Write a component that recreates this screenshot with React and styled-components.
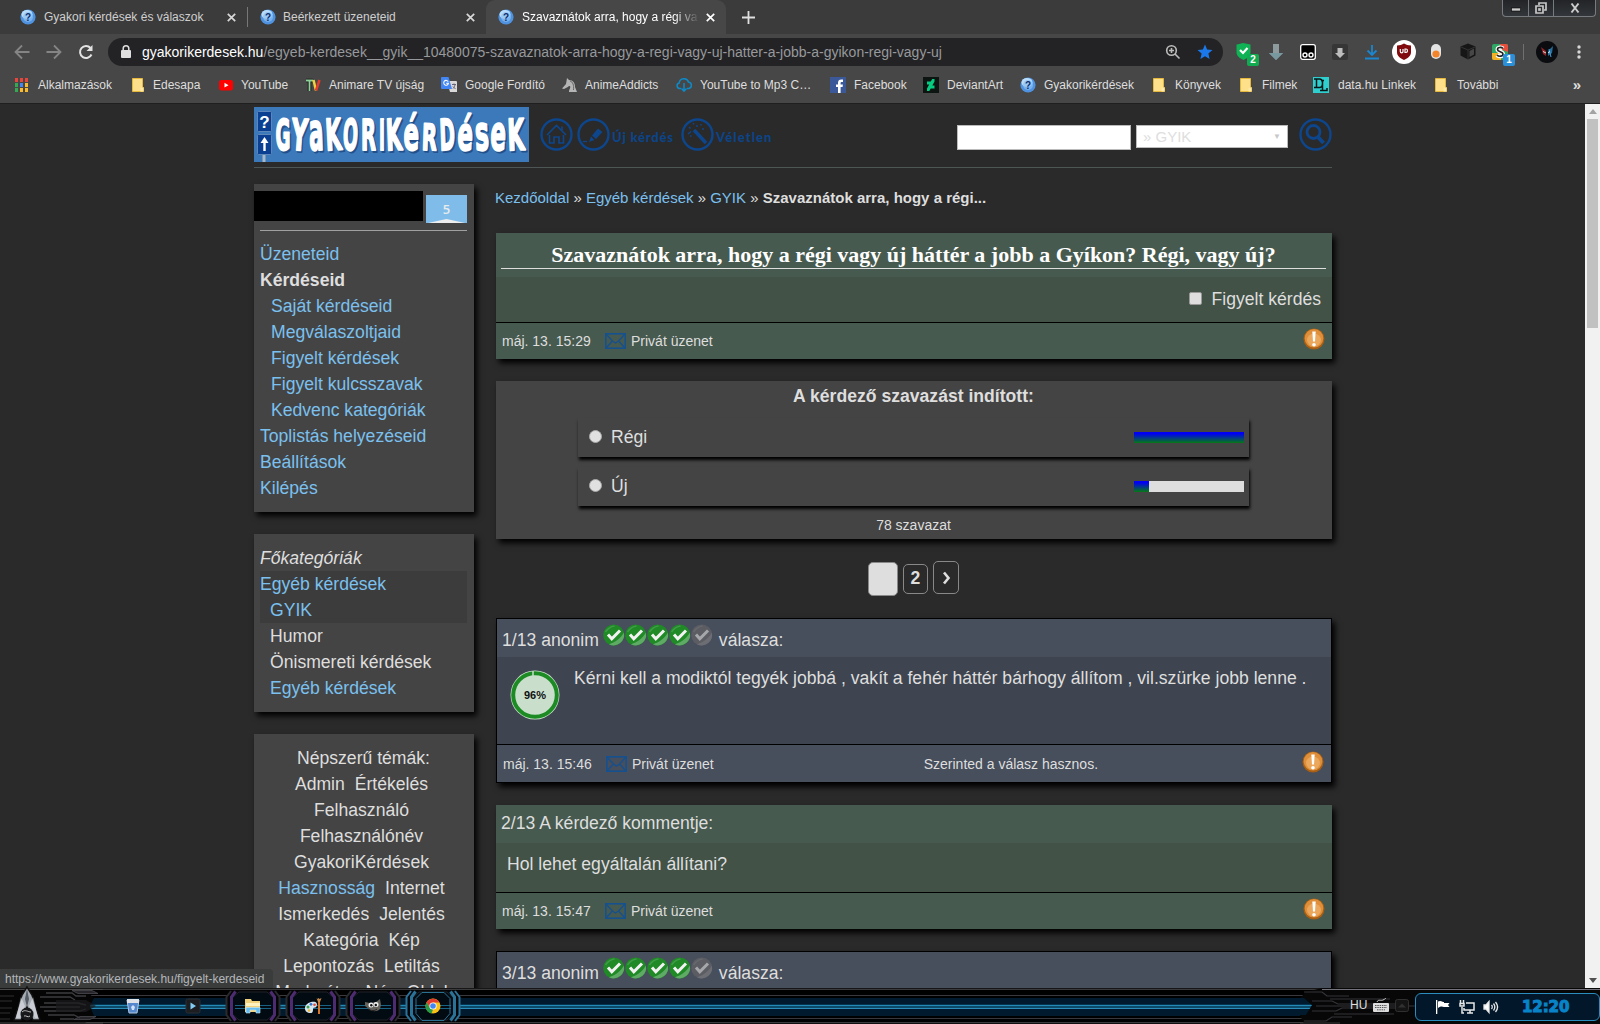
import React from "react";
import styled, { createGlobalStyle, css } from "styled-components";

const Global = createGlobalStyle`
  * { box-sizing: border-box; }
  body { margin: 0; background: #292929; overflow: hidden; }
  svg { display: block; flex: none; overflow: visible; }
`;

const Screen = styled.div`
  width: 1600px;
  height: 1024px;
  display: flex;
  flex-direction: column;
  font-family: "Liberation Sans", Arial, sans-serif;
  color: #dedede;
  overflow: hidden;
`;

/* ---------- browser chrome ---------- */
const Chrome = styled.header`
  height: 104px;
  flex: none;
  background: #474747;
  border-bottom: 1px solid #1f1f1f;
`;
const TabStrip = styled.div`
  height: 34px;
  background: #3b3b3b;
  display: flex;
  align-items: flex-start;
  padding-left: 8px;
`;
const Tab = styled.div`
  width: ${(p) => p.$w}px;
  height: 34px;
  display: flex;
  align-items: center;
  padding: 0 11px 0 12px;
  font-size: 12px;
  color: ${(p) => (p.$active ? "#fff" : "#cfcfcf")};
  background: ${(p) => (p.$active ? "#474747" : "transparent")};
  border-radius: 9px 9px 0 0;
`;
const TabTitle = styled.span`
  flex: 1;
  margin-left: ${(p) => p.$gap || 8}px;
  white-space: nowrap;
  overflow: hidden;
  ${(p) => p.$fade && css`mask-image: linear-gradient(90deg, #000 86%, transparent 101%);`}
`;
const TabClose = styled.span`
  width: ${(p) => p.$w || 20}px;
  display: flex;
  justify-content: flex-end;
`;
const TabDivider = styled.i`
  width: 1px;
  height: 20px;
  margin-top: 7px;
  background: #777;
`;
const NewTab = styled.div`
  width: 28px;
  height: 34px;
  margin-left: 8px;
  display: grid;
  place-items: center;
`;
const WindowButtons = styled.div`
  margin: 0 4px 0 auto;
  display: grid;
  grid-template-columns: 25px 25px 42px;
  height: 17px;
  border: 1px solid #777a7e;
  border-top: 0;
  border-radius: 0 0 4px 4px;
  background: linear-gradient(#222427, #33363a);
`;
const WindowButton = styled.div`
  display: grid;
  place-items: center;
  border-left: ${(p) => (p.$first ? 0 : "1px solid #777a7e")};
`;
const Toolbar = styled.div`
  height: 35px;
  display: flex;
  align-items: center;
`;
const NavButtons = styled.div`
  width: 108px;
  display: flex;
  align-items: center;
  gap: 16px;
  padding-left: 14px;
`;
const Omnibox = styled.div`
  width: 1115px;
  height: 28px;
  border-radius: 14px;
  background: #232325;
  display: flex;
  align-items: center;
  padding: 0 10px 0 13px;
  font-size: 14px;
  color: #97999c;
`;
const Url = styled.span`
  flex: 1;
  margin-left: 11px;
  white-space: nowrap;
  b { font-weight: 400; color: #fff; }
`;
const OmniActions = styled.div`
  display: flex;
  gap: 16px;
`;
const Extensions = styled.div`
  display: flex;
  align-items: center;
  margin-left: 5px;
`;
const Ext = styled.div`
  width: 32px;
  height: 28px;
  display: grid;
  place-items: center;
  position: relative;
`;
const ExtBadge = styled.span`
  position: absolute;
  right: 1px;
  bottom: 0;
  width: 12px;
  height: 12px;
  border-radius: 2px;
  background: ${(p) => p.$bg};
  color: #fff;
  font-size: 10px;
  font-weight: 700;
  line-height: 12px;
  text-align: center;
`;
const ToolbarDivider = styled.i`
  width: 1px;
  height: 16px;
  margin: 0 12px 0 7px;
  background: #707070;
`;
const Bookmarks = styled.nav`
  height: 31px;
  display: flex;
  align-items: center;
  padding: 0 19px 0 13px;
  font-size: 12px;
`;
const Bookmark = styled.a`
  width: ${(p) => p.$w}px;
  display: flex;
  align-items: center;
  gap: ${(p) => p.$gap}px;
  white-space: nowrap;
`;
const More = styled.span`
  margin-left: auto;
  font-size: 15px;
  font-weight: 700;
`;

/* ---------- page ---------- */
const Viewport = styled.div`
  height: 884px;
  flex: none;
  display: flex;
  position: relative;
  background: #2a2a2a;
  overflow: hidden;
`;
const Page = styled.div`
  width: 1585px;
  padding: 3px 0 0 254px;
`;
const Scrollbar = styled.div`
  width: 15px;
  height: 884px;
  background: #f1f1f1;
  display: flex;
  flex-direction: column;
  align-items: center;
  padding: 5px 0;
`;
const Thumb = styled.div`
  width: 11px;
  height: 209px;
  margin: 5px 0 auto;
  background: #c1c1c1;
`;
const SiteHeader = styled.div`
  width: 1078px;
  height: 61px;
  border-bottom: 1px solid #4d5654;
  display: flex;
  align-items: flex-start;
`;
const SiteNav = styled.div`
  margin: 11px 0 0 11px;
  display: flex;
  color: #0c4488;
  font: 900 13px/33px Lato, sans-serif;
`;
const NavLabel = styled.span`
  width: ${(p) => p.$w}px;
  padding: 3px 0 0 2px;
  letter-spacing: ${(p) => p.$ls}px;
  white-space: nowrap;
`;
const Search = styled.div`
  margin: 11px 0 0 auto;
  display: flex;
  align-items: center;
`;
const SearchInput = styled.div`
  width: 174px;
  height: 25px;
  margin-top: 5px;
  background: #fff;
  border: 1px solid #bbb;
`;
const SearchSelect = styled.div`
  width: 152px;
  height: 23px;
  margin: 4px 11px 0 5px;
  padding: 0 6px;
  display: flex;
  justify-content: space-between;
  align-items: center;
  background: #fff;
  border: 1px solid #bbb;
  color: #dedede;
  font-size: 15px;
  line-height: 17px;
  small { font-size: 8px; color: #c8c8c8; }
`;
const Columns = styled.div`
  display: grid;
  grid-template-columns: 220px 836px;
  gap: 22px;
  padding-top: 16px;
`;
const Sidebar = styled.aside`
  display: flex;
  flex-direction: column;
  gap: 22px;
`;
const shadow = "3px 4px 6px 0 #000";
const SideBox = styled.section`
  height: ${(p) => p.$h}px;
  padding: ${(p) => p.$pad || "6px"};
  background: #444;
  box-shadow: ${shadow};
  font-size: 17.6px;
  line-height: 26px;
  text-align: ${(p) => (p.$center ? "center" : "left")};
`;
const UserRow = styled.div`
  display: flex;
  height: 37px;
  margin: 0 -6px;
`;
const UserName = styled.div`
  width: 169px;
  height: 30px;
  margin: 1px 3px 0 0;
  background: #000;
`;
const Badge = styled.div`
  width: 41px;
  height: 28px;
  margin-top: 5px;
  background: #7fbce9;
  display: flex;
  flex-direction: column;
  align-items: center;
  justify-content: flex-end;
  font: 600 13px/20px "Open Sans", sans-serif;
  color: #e6ebee;
`;
const SideRule = styled.hr`
  height: 1px;
  margin: 3px 1px 10px 0;
  border: 0;
  background: #a0a0a0;
`;
const SideLink = styled.a`
  display: block;
  height: 26px;
  padding-left: ${(p) => p.$in || 0}px;
  color: ${(p) => (p.$plain ? "#dedede" : "#7bc0ee")};
  font-weight: ${(p) => (p.$bold ? 700 : 400)};
  font-style: ${(p) => (p.$italic ? "italic" : "normal")};
  white-space: nowrap;
`;
const Highlight = styled.div`
  background: #3c3c3c;
  margin-right: 1px;
`;
const Topics = styled.div`
  height: 26px;
  display: flex;
  justify-content: center;
  gap: 10px;
  padding-right: ${(p) => p.$shift || 5}px;
  white-space: nowrap;
`;
const Topic = styled.a`
  color: ${(p) => (p.$link ? "#7bc0ee" : "#dedede")};
`;
const Breadcrumb = styled.div`
  height: 49px;
  margin-left: -1px;
  padding-top: 5px;
  font-size: 15px;
  line-height: 18px;
  a { color: #7bc0ee; }
`;
const palettes = {
  green: { head: "#475a4f", body: "#425247" },
  blue: { head: "#474e5c", body: "#3e4550" },
};
const Post = styled.article`
  height: ${(p) => p.$h}px;
  margin-bottom: 22px;
  display: flex;
  flex-direction: column;
  background: ${(p) => palettes[p.$tone].head};
  border: ${(p) => (p.$tone === "blue" ? "1px solid #000" : 0)};
  box-shadow: ${shadow};
  font-size: 17.6px;
`;
const PostHead = styled.div`
  height: 38px;
  flex: none;
  display: flex;
  align-items: center;
  padding: ${(p) => p.$pad};
  white-space: nowrap;
`;
const Stars = styled.span`
  display: flex;
  margin: -10px 5px 0 4px;
  padding-right: 1px;
`;
const PostBody = styled.div`
  flex: 1;
  display: flex;
  padding: ${(p) => p.$pad || "12px 11px"};
  background: ${(p) => palettes[p.$tone].body};
  border-bottom: 1px solid #000;
  line-height: 20px;
  white-space: nowrap;
`;
const AnswerText = styled.span`
  margin-top: -2px;
  padding-left: 14px;
`;
const PostFoot = styled.div`
  height: ${(p) => p.$h || 36}px;
  flex: none;
  display: flex;
  align-items: center;
  padding: 0 7px 0 6px;
  font-size: 14px;
`;
const FootDate = styled.span` width: 103px; `;
const FootMail = styled.span` margin-left: 5px; `;
const FootNote = styled.span` margin-left: 210px; `;
const FootWarn = styled.span` margin: -4px 0 0 auto; `;
const QuestionHead = styled.div`
  height: 44px;
  flex: none;
  padding: 8px 6px 8px 5px;
`;
const QuestionTitle = styled.h1`
  margin: 0;
  height: 28px;
  border-bottom: 1px solid #dedede;
  text-align: center;
  font: 700 22px/28px "Liberation Serif", "Times New Roman", serif;
  color: #fff;
`;
const Watch = styled.label`
  flex: 1;
  display: flex;
  align-items: center;
  justify-content: flex-end;
  gap: 9px;
  padding-bottom: 2px;
  font-size: 17.6px;
`;
const Check = styled.i`
  width: 13px;
  height: 13px;
  margin-top: -1px;
  border: 1px solid #999;
  border-radius: 2px;
  background: #dedede;
`;
const Poll = styled.section`
  height: 158px;
  display: flex;
  flex-direction: column;
  align-items: center;
  padding-top: 5px;
  background: #444;
  box-shadow: ${shadow};
`;
const PollTitle = styled.h2`
  margin: 0 1px 12px 0;
  font: 700 17.6px/20px "Liberation Sans", sans-serif;
`;
const PollRow = styled.div`
  width: 671px;
  height: 39px;
  margin: 0 1px ${(p) => (p.$last ? 11 : 10)}px 0;
  display: flex;
  align-items: center;
  padding: 0 5px 0 11px;
  box-shadow: 1px 3px 3px #000;
  background: #444;
  font-size: 17.6px;
`;
const Radio = styled.i`
  width: 13px;
  height: 13px;
  margin: -2px 9px 0 0;
  border-radius: 50%;
  border: 1px solid #aaa;
  background: #e0e0e0;
`;
const Meter = styled.div`
  width: 110px;
  height: 11px;
  margin-left: auto;
  background: #dedede;
`;
const MeterFill = styled.div`
  width: ${(p) => p.$w}px;
  height: 11px;
  background: linear-gradient(#0000f5 15%, #067a12);
`;
const Votes = styled.div`
  padding-right: 1px;
  font-size: 14px;
  line-height: 16px;
`;
const Pager = styled.div`
  height: 79px;
  display: flex;
  align-items: center;
  justify-content: center;
  gap: 5px;
  padding-right: 1px;
`;
const PageLink = styled.a`
  width: ${(p) => p.$w}px;
  height: ${(p) => p.$h}px;
  margin-bottom: ${(p) => p.$lift || 0}px;
  display: grid;
  place-items: center;
  border: 1px solid #888;
  border-radius: 5px;
  background: ${(p) => (p.$current ? "#dedede" : "transparent")};
  font-size: 17.6px;
  font-weight: 700;
`;
const StatusBubble = styled.div`
  position: absolute;
  left: 0;
  bottom: 0;
  width: 273px;
  height: 19px;
  padding: 0 5px;
  border-radius: 0 4px 0 0;
  background: #3a3c3c;
  color: #b4b6b8;
  font-size: 12px;
  line-height: 21px;
  white-space: nowrap;
`;

/* ---------- taskbar ---------- */
const Taskbar = styled.footer`
  height: 36px;
  flex: none;
  position: relative;
  display: flex;
  align-items: center;
  background: linear-gradient(
    #161616 0 1px, #3b3b3d 1px 2px, #000 2px 7px, #39393d 7px 8px, #000 8px 10px,
    #021a2d 10px 16px, #06344f 16px 17px, #2389b7 17px 18px, #0c4a6a 18px 20px, #2b8dba 20px 21px, #021a2d 21px 28px,
    #000 28px 30px, #39393d 30px 31px, #000 31px 34px, #3b3b3d 34px 35px, #101010 35px
  );
`;
const TaskSpacer = styled.div` width: 103px; flex: none; align-self: stretch; `;
const TaskItem = styled.div`
  width: 60px;
  height: 36px;
  display: grid;
  place-items: center;
  position: relative;
`;
const TaskFrame = styled.div`
  position: absolute;
  inset: 0;
`;
const TaskIcon = styled.div` position: relative; `;
const TaskRight = styled.div`
  margin-left: auto;
  width: 300px;
  height: 36px;
  display: flex;
  align-items: center;
  position: relative;
`;
const RightPlate = styled.div` position: absolute; inset: 0; `;
const Lang = styled.div`
  position: relative;
  width: 72px;
  height: 36px;
  margin-left: 50px;
  padding-bottom: 3px;
  display: flex;
  align-items: center;
  gap: 6px;
  font-size: 12px;
  color: #ddd;
`;
const Tray = styled.div`
  position: relative;
  width: 185px;
  height: 28px;
  margin: 1px 0 0 -7px;
  border: 1px solid #2a8dbd;
  border-radius: 6px;
  background: #02182a;
  display: flex;
  align-items: center;
  gap: 8px;
  padding-left: 19px;
`;
const Clock = styled.span`
  margin: 1px 0 0 15px;
  color: #0883c9;
  font: 700 15px/16px "DejaVu Sans", sans-serif;
  letter-spacing: -0.1px;
  -webkit-text-stroke: 1px #0883c9;
`;

/* ---------- drawings ---------- */
const Favicon = () => (
  <svg width="16" height="16" viewBox="0 0 16 16">
    <circle cx="8" cy="8" r="7.600" fill="#4f93e0" />
    <ellipse cx="7" cy="5.500" rx="5.500" ry="4.500" fill="#b9dcfb" />
    <circle cx="8" cy="8" r="5" fill="#8abff2" opacity=".7" />
    <text x="8" y="11.500" textAnchor="middle" fontSize="10" fontWeight="700" fontFamily="Liberation Sans" fill="#0c2d6a">?</text>
  </svg>
);
const CloseX = ({ c = "#d8d8d8" }) => (
  <svg width="9" height="9" viewBox="0 0 9 9"><path d="M.8.8 8.2 8.2M8.2.8.8 8.2" stroke={c} strokeWidth="1.700" /></svg>
);
const Folder = () => (
  <svg width="14" height="16" viewBox="0 0 14 16"><path d="M1.500 1.500h10v9h1v4h-11z" fill="#fee08a" stroke="#e6b93c" /><path d="M9.500 10.500h3v4h-3z" fill="#ffe9a8" /></svg>
);
const AppsIcon = () => (
  <svg width="16" height="16" viewBox="0 0 16 16">
    {[["#e8453c", 2, 1], ["#e8453c", 7, 1], ["#e8453c", 12, 1], ["#35a853", 2, 6], ["#4285f4", 7, 6], ["#f9bb2d", 12, 6], ["#35a853", 2, 11], ["#f9bb2d", 7, 11], ["#f9bb2d", 12, 11]].map(([c, x, y]) => (
      <rect key={x + "-" + y} x={x} y={y} width="3" height="4" fill={c} />
    ))}
  </svg>
);
const YouTube = () => (
  <svg width="16" height="16" viewBox="0 0 16 16"><rect x="1" y="3" width="14" height="10.500" rx="2.500" fill="#f00" /><path d="m6.500 5.800 4 2.400-4 2.400z" fill="#fff" /></svg>
);
const TvIcon = () => (
  <svg width="16" height="16" viewBox="0 0 16 16"><path d="M1 3.500h7M4.500 3.500V14" stroke="#111" strokeWidth="3.500" /><path d="M1 3.500h7M4.500 3.500V14" stroke="#8fcf9a" strokeWidth="1.800" /><path d="m8.500 3 2.500 10.500" stroke="#f0d040" strokeWidth="2.500" /><path d="M11 13.500 14.500 3" stroke="#e33b2e" strokeWidth="2.500" /></svg>
);
const Translate = () => (
  <svg width="16" height="16" viewBox="0 0 16 16"><path d="M6 4h9a1 1 0 0 1 1 1v10H9z" fill="#d9d9d9" /><path d="M0 1a1 1 0 0 1 1-1h6.500L11 12H1a1 1 0 0 1-1-1z" fill="#4285f4" /><path d="M7.200 4.600A2.400 2.400 0 1 0 7.500 6.200H5.200" fill="none" stroke="#fff" strokeWidth="1.100" /><path d="M11 7.500h4M13 6.500v1M14 8c-.5 2-1.500 3-2 3.500M12 9.500l2.500 2.500" stroke="#667" fill="none" /></svg>
);
const Horse = () => (
  <svg width="16" height="16" viewBox="0 0 16 16"><path d="M1 11.500 5 7 6 1l2 2c4 0 6 3 6 7l2 5H8c0-3 2-4 1-6-2 0-3 2-6 3z" fill="#b5b5b5" /><path d="M9 4c3 1 4 4 3.500 9" stroke="#666" fill="none" /></svg>
);
const Cloud = () => (
  <svg width="16" height="16" viewBox="0 0 16 16" fill="none" stroke="#0d8ac9" strokeWidth="1.500"><path d="M5 11.500H3.500a2.800 2.800 0 0 1-.3-5.500A4.800 4.800 0 0 1 12.500 5a3.300 3.300 0 0 1 .2 6.500H11" /><path d="M8 6v8M5.500 11.500 8 14.200l2.500-2.700" /></svg>
);
const Fb = () => (
  <svg width="16" height="16" viewBox="0 0 16 16"><rect width="16" height="16" fill="#3b5998" /><path d="M8 16V10H6V7.500h2V5.800C8 3.700 9.200 2.500 11.200 2.500H13V5h-1.200c-1 0-1.200.4-1.200 1.200v1.300h2.300L12.600 10h-2V16z" fill="#fff" /></svg>
);
const Deviant = () => (
  <svg width="16" height="16" viewBox="0 0 16 16"><rect width="16" height="16" fill="#0d1512" /><path d="M11.500 2v2.500L9.300 8.600h2.200v3H7.700L6.300 14H4v-2.500l2.200-4H4v-3h3.800L9.200 2z" fill="#05cc80" /></svg>
);
const DataHu = () => (
  <svg width="16" height="16" viewBox="0 0 16 16"><rect width="16" height="16" fill="#2fcfcf" /><path d="M1 2h5.500c4 0 4 8.500 0 8.500H1M3.500 2v8.500M8 3.500h3M9.500 3.500v10h4.500V11M7 13.500h3" fill="none" stroke="#071717" strokeWidth="1.500" /></svg>
);

/* glyph, x, width, tilt, size */
const letters = [
  ["G", 275, 16, 0, 43], ["Y", 291, 17, 4, 43], ["a", 308.5, 15.5, -2, 52], ["K", 325, 17, -3, 43], ["O", 342.5, 16, 2, 43],
  ["R", 360.5, 16, 0, 43], ["I", 378.5, 7, 0, 43], ["K", 385.5, 17, -2, 43], ["é", 403, 16.5, 0, 46], ["R", 421.5, 16, 2, 36],
  ["D", 439, 16.5, -2, 43], ["é", 457, 16.5, 2, 46], ["s", 474.5, 15, -2, 48], ["e", 490, 16.5, 2, 48], ["K", 507, 18, -2, 43],
];
const Word = ({ dx, dy, fill }) =>
  letters.map(([ch, x, w, tilt, size], i) => (
    <text key={i} x={x - 253.5 + dx} y={43 + dy} fontSize={size} textLength={w - 1} lengthAdjust="spacingAndGlyphs" fontFamily="DejaVu Sans" fontWeight="700" fill={fill} stroke={fill} strokeWidth="2" strokeLinejoin="round" transform={`rotate(${tilt} ${x - 246} 28)`}>{ch}</text>
  ));
const Logo = () => (
  <svg width="275" height="55" viewBox="0 0 275 55">
    <rect width="275" height="55" fill="#3b79ba" />
    <path d="M8.500 48h3v7h-3z" fill="#a9b8c8" />
    <rect x="3.500" y="4.500" width="14" height="20" rx="1" fill="#0b3f92" stroke="#5f86b8" />
    <rect x="3.500" y="27.500" width="14" height="20" rx="1" fill="#0b3f92" stroke="#5f86b8" />
    <text x="10.500" y="20.500" textAnchor="middle" fontSize="17" fontWeight="700" fontFamily="Liberation Sans" fill="#fff">?</text>
    <path d="m10.500 30 4 6h-2.800v8H9.300v-8H6.500z" fill="#fff" />
    <Word dx={1.500} dy={1.800} fill="#24508a" />
    <Word dx={0} dy={0} fill="#fff" />
  </svg>
);
const RingSvg = styled.svg` margin-right: ${(p) => p.$mr}px; `;
const Ring = ({ children, mr = 0 }) => (
  <RingSvg $mr={mr} width="33" height="33" viewBox="0 0 33 33" fill="none" stroke="#0d468c" strokeWidth="2.400">
    <circle cx="16.500" cy="16.500" r="15" />
    {children}
  </RingSvg>
);
const Mail = () => (
  <svg width="21" height="16" viewBox="0 0 21 16" fill="none" stroke="#15508f" strokeWidth="1.600"><rect x=".8" y=".8" width="19.400" height="14.400" /><path d="m1 1 6.500 7 3 2 3-2L20 1M1 15l6-6.500M20 15l-6-6.500" strokeWidth="1.300" /></svg>
);
const Warn = () => (
  <svg width="22" height="22" viewBox="0 0 22 22">
    <circle cx="11" cy="11" r="10.500" fill="#a85f14" /><circle cx="11" cy="10.300" r="9.300" fill="#df8f3a" /><ellipse cx="11" cy="12" rx="7" ry="6.500" fill="#eba75c" />
    <path d="M9.300 3.500h3.400L12 13.500h-2z" fill="#fff" /><circle cx="11" cy="16.800" r="1.800" fill="#fff" />
  </svg>
);
const Star = ({ off }) => (
  <svg width="22" height="22" viewBox="0 0 22 22">
    <circle cx="10.700" cy="11" r="10.500" fill={off ? "#5b5d63" : "#1f8a26"} />
    <path d="M20.800 8.500A10.500 10.500 0 0 1 6 20.300C13 18 18 14 20.800 8.500z" fill={off ? "#6c6e74" : "#5fab66"} />
    <path d="M2.500 8c2-3 5-5.500 9-6" stroke={off ? "#66686d" : "#3f9c47"} strokeWidth="1.500" fill="none" />
    <path d="m5 10.500 3.800 4.200L17 6.500" stroke={off ? "#a5a7ab" : "#f2f2f2"} strokeWidth="3" fill="none" />
  </svg>
);
const RatingSvg = styled.svg` margin-left: -1px; `;
const Rating = () => (
  <RatingSvg width="50" height="50" viewBox="0 0 50 50">
    <circle cx="25" cy="25" r="24.500" fill="#c9dfcb" />
    <circle cx="25" cy="25" r="21.800" fill="none" stroke="#1d8b24" strokeWidth="4" />
    <path d="M23 1v6" stroke="#c9dfcb" strokeWidth="1.500" />
    <text x="25" y="29" textAnchor="middle" fontSize="11" fontWeight="700" fontFamily="Liberation Sans" fill="#111">96%</text>
  </RatingSvg>
);
const Triangle = ({ down }) => (
  <svg width="8" height="5" viewBox="0 0 8 5"><path d={down ? "M0 0h8L4 5z" : "M0 5h8L4 0z"} fill={down ? "#505050" : "#a3a3a3"} /></svg>
);
const Frame = ({ blue }) => {
  const c = blue ? "#2b7299" : "#4d2b70";
  return (
    <svg width="60" height="36" viewBox="0 0 60 36">
      <path d="M3 9 8 2h44l5 7v18l-5 7H8l-5-7z" fill="#040506" />
      <path d="M16 4h28l7 6v16l-7 6H16l-7-6V10z" fill="#020a12" stroke="#202328" />
      <path d="M12 17.500h36M12 20.500h36" stroke="#1a6284" />
      <path d="M8 3 3.500 9v18L8 33M52 3l4.500 6v18L52 33" fill="none" stroke={blue ? c : "#2a2a2e"} strokeWidth="2" />
      <path d="M12.500 3.500 8.500 9v18l4 5.500M47.500 3.500l4 5.500v18l-4 5.500" fill="none" stroke={c} strokeWidth="3" />
      {blue && <path d="M19 4.500h22l6 6v15l-6 7H19l-6-7v-15z" fill="none" stroke="#2a7191" />}
    </svg>
  );
};
const LeftPlate = () => (
  <svg width="103" height="36" viewBox="0 0 103 36">
    <path d="M0 1h84l10 9-4 8 4 10-10 8H0z" fill="#050505" />
    <path d="M0 1.500h103M0 35h103" stroke="#4a4a4a" />
    <path d="M72 2.500h20l6 3H78zM74 31.500h16l6-3H80z" fill="#26262a" stroke="#4a4a50" strokeWidth=".8" />
    <path d="M46 5h26l4 3h10M40 9h30l5 3M44 15h34l8 2M40 19h40M44 23h36l6-2M48 27h26l6 3M60 31h14" stroke="#3c3c40" strokeWidth="1.300" fill="none" />
    <path d="M0 8h14M0 13h12M0 20h12M0 25h10M0 31h10" stroke="#303033" />
    <path d="M56 12h30l10 6-10 6H56z" fill="#1b1b1e" opacity=".7" />
    <path d="m27-1 5 8 8 25h-7l-6-13-6 13h-7l8-25z" fill="#a5abb3" stroke="#111" strokeWidth="1.500" />
    <path d="m27 1 2 10-2 8-2-8z" fill="#555b63" />
    <path d="m21 9-5 21h4l5-12zM33 9l5 21h-3l-6-12z" fill="#e3e6ea" opacity=".6" />
    <circle cx="27" cy="26" r="6.500" fill="#17181a" /><path d="M22 24c3-3 6 0 9 0M24 28c2-1 4 2 6 0" stroke="#bbb" fill="none" />
  </svg>
);
const Bin = () => (
  <svg width="14" height="16" viewBox="0 0 14 16"><path d="M1 2h12l-2 13H3z" fill="#5587cc" stroke="#b3c9e2" /><path d="M1 1h12v4H1z" fill="#dfe3e8" /><path d="m5 9 2-2 2 2-1 3H6z" fill="#cfe2fa" /></svg>
);
const Play = () => (
  <svg width="16" height="16" viewBox="0 0 16 16"><rect x="1" y="1" width="14" height="14" rx="1.500" fill="#1b1d20" stroke="#2b2e32" /><path d="m5.500 4.500 5.500 3.500-5.500 3.500z" fill="#82cdf4" /></svg>
);
const Explorer = () => (
  <svg width="18" height="16" viewBox="0 0 18 16"><path d="M1 1h6l1 2h8v11H1z" fill="#f1d27c" /><path d="M2 5h14v3H2z" fill="#fff2bf" /><path d="M2 15V9.500h14V15h-4v-3H6v3z" fill="#66bdf0" stroke="#c7e8fa" strokeWidth=".6" /></svg>
);
const Paint = () => (
  <svg width="18" height="18" viewBox="0 0 18 18"><path d="M7 5c5-1 7 1 5.500 4.500-1 2-3.500 0-3.500 3s-1 4-4 3.500C-.5 15-1 7 7 5z" fill="#d6e5f1" /><circle cx="4" cy="10" r="1.500" fill="#38a349" /><circle cx="7" cy="7.300" r="1.400" fill="#2b73cf" /><circle cx="10.500" cy="7.800" r="1.300" fill="#e34b31" /><circle cx="5" cy="13.500" r="1.300" fill="#f0bb31" /><path d="M15 4v13" stroke="#d5752a" strokeWidth="2" /><path d="m12.500 1 1 1 1-1 1 1 2-1-1.500 4h-2z" fill="#c98a4a" /></svg>
);
const Gimp = () => (
  <svg width="18" height="16" viewBox="0 0 18 16"><path d="m1 4 5 1 6-1 4-3 1 6-1 4c-3 3-8 3-11 0L1 8z" fill="#66635d" /><circle cx="7" cy="7" r="2.500" fill="#eee" /><circle cx="12" cy="6.500" r="2.500" fill="#eee" /><circle cx="7.300" cy="7.300" r="1.200" fill="#111" /><circle cx="11.800" cy="7" r="1.200" fill="#111" /><path d="M4 11c3 2 7 2 9 0" stroke="#222" fill="none" /></svg>
);
const ChromeLogo = () => (
  <svg width="16" height="16" viewBox="0 0 16 16"><circle cx="8" cy="8" r="7.500" fill="#fbc116" /><path d="M1.500 4.300A7.500 7.500 0 0 1 14.500 4.500H8L4.800 9.500z" fill="#e33b2e" /><path d="M1.500 4.300 5 10l3 1.500-1.500 3.900A7.500 7.500 0 0 1 1.500 4.300z" fill="#269a47" /><circle cx="8" cy="8" r="3.600" fill="#fff" /><circle cx="8" cy="8" r="2.800" fill="#4285f4" /></svg>
);

/* label, item width, icon, gap between icon and label */
const bookmarks = [
  ["Alkalmazások", 117, AppsIcon, 9], ["Edesapa", 88, Folder, 7], ["YouTube", 87, YouTube, 7], ["Animare TV újság", 136, TvIcon, 8],
  ["Google Fordító", 120, Translate, 8], ["AnimeAddicts", 115, Horse, 8], ["YouTube to Mp3 C…", 154, Cloud, 8], ["Facebook", 93, Fb, 8],
  ["DeviantArt", 97, Deviant, 8], ["Gyakorikérdések", 131, Favicon, 8], ["Könyvek", 87, Folder, 8], ["Filmek", 75, Folder, 8],
  ["data.hu Linkek", 120, DataHu, 9], ["További", 80, Folder, 8],
];

const Slot = styled.span`
  width: 16px;
  display: grid;
  place-items: center;
`;

const PostFooter = ({ date, note, h }) => (
  <PostFoot $h={h}>
    <FootDate>{date}</FootDate>
    <Mail />
    <FootMail>Privát üzenet</FootMail>
    {note && <FootNote>{note}</FootNote>}
    <FootWarn><Warn /></FootWarn>
  </PostFoot>
);
const AnswerHead = ({ n }) => (
  <PostHead $pad="4px 5px 0">
    {n}/13 anonim
    <Stars><Star /><Star /><Star /><Star /><Star off /></Stars>
    válasza:
  </PostHead>
);

export default function App() {
  return (
    <Screen>
      <Global />
      <Chrome>
        <TabStrip>
          <Tab $w={239}><Favicon /><TabTitle>Gyakori kérdések és válaszok</TabTitle><TabClose><CloseX /></TabClose></Tab>
          <TabDivider />
          <Tab $w={238}><Favicon /><TabTitle $gap={7}>Beérkezett üzeneteid</TabTitle><TabClose><CloseX /></TabClose></Tab>
          <Tab $w={240} $active><Favicon /><TabTitle $fade>Szavaznátok arra, hogy a régi vagy új</TabTitle><TabClose $w={17}><CloseX c="#fff" /></TabClose></Tab>
          <NewTab><svg width="13" height="13" viewBox="0 0 13 13"><path d="M6.500 0v13M0 6.500h13" stroke="#e0e0e0" strokeWidth="1.800" /></svg></NewTab>
          <WindowButtons>
            <WindowButton $first><svg width="12" height="12" viewBox="0 0 12 12"><rect x="1.500" y="6" width="9" height="3" fill="#ccc" stroke="#000" strokeWidth=".6" /></svg></WindowButton>
            <WindowButton><svg width="12" height="12" viewBox="0 0 12 12" fill="none" stroke="#c6c6c6" strokeWidth="1.700"><path d="M4 3V1h7v7H9M1 4h7v7H1z" /><path d="M4 7h1v1H4z" /></svg></WindowButton>
            <WindowButton><svg width="10" height="10" viewBox="0 0 10 10"><path d="m1.500 .5 7 9M8.500 .5l-7 9" stroke="#ccc" strokeWidth="2" /></svg></WindowButton>
          </WindowButtons>
        </TabStrip>
        <Toolbar>
          <NavButtons>
            <svg width="16" height="16" viewBox="0 0 16 16" fill="none" stroke="#858585" strokeWidth="1.800"><path d="M15.500 8H2M8 1.500 1.500 8 8 14.500" /></svg>
            <svg width="16" height="16" viewBox="0 0 16 16" fill="none" stroke="#858585" strokeWidth="1.800"><path d="M.5 8H14M8 1.500 14.500 8 8 14.500" /></svg>
            <svg width="16" height="16" viewBox="0 0 16 16" fill="none" stroke="#e3e3e3" strokeWidth="2"><path d="M13.500 10.500A6 6 0 1 1 12.500 4" /><path d="M14.500 1v6h-6z" fill="#e3e3e3" stroke="none" /></svg>
          </NavButtons>
          <Omnibox>
            <svg width="10" height="14" viewBox="0 0 10 14"><rect y="5" width="10" height="8" rx="1" fill="#e0e0e0" /><path d="M2.200 5.500V3.500a2.800 2.800 0 0 1 5.600 0v2" stroke="#e0e0e0" strokeWidth="1.500" fill="none" /></svg>
            <Url><b>gyakorikerdesek.hu</b>/egyeb-kerdesek__gyik__10480075-szavaznatok-arra-hogy-a-regi-vagy-uj-hatter-a-jobb-a-gyikon-regi-vagy-uj</Url>
            <OmniActions>
              <svg width="16" height="16" viewBox="0 0 16 16" fill="none" stroke="#bcbcbc" strokeWidth="1.600"><circle cx="6.500" cy="6.500" r="4.800" /><path d="m10 10 4.500 4.500M4 6.500h5M6.500 4v5" /></svg>
              <svg width="16" height="16" viewBox="0 0 16 16"><path d="m8 .5 2.100 5 5.400.5-4.100 3.600 1.200 5.400L8 12.200 3.400 15l1.200-5.400L.5 6l5.400-.5z" fill="#1a78ea" /></svg>
            </OmniActions>
          </Omnibox>
          <Extensions>
            <Ext><svg width="16" height="18" viewBox="0 0 16 18"><path d="M1 1.500 7 0l7.500 1.500V9c0 4-3 6-7 8-4-2-7-4-7-8V1.500z" fill="#0fb254" /><path d="m4 7 3 3 4.500-5" stroke="#fff" strokeWidth="2.200" fill="none" /></svg><ExtBadge $bg="#12aa50">2</ExtBadge></Ext>
            <Ext><svg width="16" height="16" viewBox="0 0 16 16"><path d="M5 0h6v9h4l-7 7-7-7h4z" fill="#8d9b9f" /><path d="M1 9h14l-7 7z" fill="#77989e" /></svg></Ext>
            <Ext><svg width="16" height="16" viewBox="0 0 16 16"><rect x=".7" y=".7" width="14.600" height="14.600" rx="2" fill="#000" stroke="#fff" strokeWidth="1.300" /><g fill="none" stroke="#fff" strokeWidth="1.400"><circle cx="5" cy="11" r="2" /><circle cx="11" cy="11" r="2" /></g></svg></Ext>
            <Ext><svg width="16" height="16" viewBox="0 0 16 16"><rect width="16" height="16" rx="2" fill="#363636" /><path d="M5.500 4h5v5H13l-5 5-5-5h2.500z" fill="#bcbcbc" /></svg></Ext>
            <Ext><svg width="14" height="16" viewBox="0 0 14 16" fill="none" stroke="#1a86cf" strokeWidth="1.800"><path d="M7 1v10M2.500 6.500 7 11l4.500-4.500M0 14.500h14" /></svg></Ext>
            <Ext><svg width="24" height="24" viewBox="0 0 24 24"><circle cx="12" cy="12" r="12" fill="#fff" /><path d="M5 5.500c3 0 5-1 7-2 2 1 4 2 7 2V12c0 4-3 6-7 8-4-2-7-4-7-8z" fill="#800a0d" /><path d="M8.300 9v2.500c0 1.800 2.700 1.800 2.700 0V9M13 9v3.500h1c2 0 2-3.500 0-3.500z" fill="none" stroke="#fff" strokeWidth="1.200" /></svg></Ext>
            <Ext><svg width="10" height="15" viewBox="0 0 10 15"><rect width="10" height="15" rx="5" fill="#e3e3e3" /><circle cx="5" cy="10" r="3.600" fill="#f4842a" /></svg></Ext>
            <Ext><svg width="16" height="17" viewBox="0 0 16 17"><path d="M.5 3.500 8 .5l7.500 3v9L8 16.500l-7.500-4z" fill="#161616" /><path d="M9.500 8 14 5.500v6L9.500 14z" fill="#474747" /><path d="M1 4l7 3 7-3M8 7v9" stroke="#333" fill="none" /></svg></Ext>
            <Ext><svg width="16" height="16" viewBox="0 0 16 16"><rect width="16" height="16" rx="2" fill="#2fa866" /><path d="M8 0h6a2 2 0 0 1 2 2v6L8 5z" fill="#e84e3c" /><path d="M0 9v5a2 2 0 0 0 2 2h7V9z" fill="#f3b224" /><path d="M11 4.500C9.500 3 5.500 3 5.500 5.500S11 7.500 11 10s-4 3-6 1" fill="none" stroke="#fff" strokeWidth="4" /><path d="M11 4.500C9.500 3 5.500 3 5.500 5.500S11 7.500 11 10s-4 3-6 1" fill="none" stroke="#222" strokeWidth="1.700" /></svg><ExtBadge $bg="#2a90d8">1</ExtBadge></Ext>
            <ToolbarDivider />
            <svg width="22" height="22" viewBox="0 0 22 22"><circle cx="11" cy="11" r="11" fill="#0b0c10" /><path d="m5 6 5 4v5l-3-2z" fill="#8e2328" /><path d="m17 5-5 5v5l4-3z" fill="#276ea0" /><path d="m13 8 2 8" stroke="#4aa0d8" /><path d="M7 10.500l3 1.500M14 10.500l-2 1.500" stroke="#ddd" /></svg>
            <svg width="42" height="16" viewBox="0 0 42 16" fill="#d8d8d8"><circle cx="21" cy="3" r="1.700" /><circle cx="21" cy="8" r="1.700" /><circle cx="21" cy="13" r="1.700" /></svg>
          </Extensions>
        </Toolbar>
        <Bookmarks>
          {bookmarks.map(([label, w, Icon, gap], i) => (
            <Bookmark key={i} $w={w} $gap={gap}><Slot><Icon /></Slot>{label}</Bookmark>
          ))}
          <More>»</More>
        </Bookmarks>
      </Chrome>

      <Viewport>
        <Page>
          <SiteHeader>
            <Logo />
            <SiteNav>
              <Ring mr={4}><path d="m7 17 9.500-9.500L26 17M9.500 17v8h4.500v-6h5v6h4.500v-8M22 12V8.500" strokeWidth="1.600" /></Ring>
              <Ring><path d="m15 17.500 6-7 4.500 3.500-6.500 7z" fill="#0d468c" stroke="none" /><path d="m14 18.500-2 5.500 5.500-2z" fill="#0d468c" stroke="none" /><path d="M6 23.500h4" strokeWidth="1.300" /></Ring>
              <NavLabel $w={71} $ls={0.8}>Új kérdés</NavLabel>
              <Ring><path d="m13 12 12 13" strokeWidth="3.500" /><path d="m8 9 1.500 1.500M16 7v2M7 16l3-2.500M20 6v1.500M21 11h2M12.500 5v1.500M9 18h1.500" strokeWidth="1.500" /></Ring>
              <NavLabel $w={90} $ls={1.1}>Véletlen</NavLabel>
            </SiteNav>
            <Search>
              <SearchInput />
              <SearchSelect>» GYIK<small>▼</small></SearchSelect>
              <Ring><circle cx="14.500" cy="14" r="6.500" strokeWidth="2.800" /><path d="m19 19 5.500 6" strokeWidth="4" /></Ring>
            </Search>
          </SiteHeader>
          <Columns>
            <Sidebar>
              <SideBox $h={328}>
                <UserRow>
                  <UserName />
                  <Badge>5<svg width="41" height="4" viewBox="0 0 41 4"><path d="M2 4 20.500 0 39 4z" fill="#eee" /></svg></Badge>
                </UserRow>
                <SideRule />
                <SideLink>Üzeneteid</SideLink>
                <SideLink $plain $bold>Kérdéseid</SideLink>
                <SideLink $in={11}>Saját kérdéseid</SideLink>
                <SideLink $in={11}>Megválaszoltjaid</SideLink>
                <SideLink $in={11}>Figyelt kérdések</SideLink>
                <SideLink $in={11}>Figyelt kulcsszavak</SideLink>
                <SideLink $in={11}>Kedvenc kategóriák</SideLink>
                <SideLink>Toplistás helyezéseid</SideLink>
                <SideLink>Beállítások</SideLink>
                <SideLink>Kilépés</SideLink>
              </SideBox>
              <SideBox $h={178} $pad="11px 6px">
                <SideLink $plain $italic>Főkategóriák</SideLink>
                <Highlight>
                  <SideLink>Egyéb kérdések</SideLink>
                  <SideLink $in={10}>GYIK</SideLink>
                </Highlight>
                <SideLink $in={10} $plain>Humor</SideLink>
                <SideLink $in={10} $plain>Önismereti kérdések</SideLink>
                <SideLink $in={10}>Egyéb kérdések</SideLink>
              </SideBox>
              <SideBox $h={300} $pad="11px 6px" $center>
                <Topics $shift={1}><Topic>Népszerű témák:</Topic></Topics>
                <Topics><Topic>Admin</Topic><Topic>Értékelés</Topic></Topics>
                <Topics><Topic>Felhasználó</Topic></Topics>
                <Topics><Topic>Felhasználónév</Topic></Topics>
                <Topics><Topic>GyakoriKérdések</Topic></Topics>
                <Topics><Topic $link>Hasznosság</Topic><Topic>Internet</Topic></Topics>
                <Topics><Topic>Ismerkedés</Topic><Topic>Jelentés</Topic></Topics>
                <Topics><Topic>Kategória</Topic><Topic>Kép</Topic></Topics>
                <Topics><Topic>Lepontozás</Topic><Topic>Letiltás</Topic></Topics>
                <Topics><Topic>Moderátor</Topic><Topic>Név</Topic><Topic>Oldal</Topic></Topics>
              </SideBox>
            </Sidebar>
            <main>
              <Breadcrumb>
                <a>Kezdőoldal</a> » <a>Egyéb kérdések</a> » <a>GYIK</a> » <b>Szavaznátok arra, hogy a régi...</b>
              </Breadcrumb>
              <Post $tone="green" $h={126}>
                <QuestionHead><QuestionTitle>Szavaznátok arra, hogy a régi vagy új háttér a jobb a Gyíkon? Régi, vagy új?</QuestionTitle></QuestionHead>
                <PostBody $tone="green" $pad="0 11px"><Watch><Check />Figyelt kérdés</Watch></PostBody>
                <PostFooter date="máj. 13. 15:29" />
              </Post>
              <Poll>
                <PollTitle>A kérdező szavazást indított:</PollTitle>
                <PollRow><Radio />Régi<Meter><MeterFill $w={110} /></Meter></PollRow>
                <PollRow $last><Radio />Új<Meter><MeterFill $w={15} /></Meter></PollRow>
                <Votes>78 szavazat</Votes>
              </Poll>
              <Pager>
                <PageLink $w={30} $h={34} $current />
                <PageLink $w={25} $h={30}>2</PageLink>
                <PageLink $w={26} $h={33} $lift={2}><svg width="9" height="14" viewBox="0 0 9 14"><path d="m2 1.500 4.500 5.500L2 12.500" fill="none" stroke="#dedede" strokeWidth="2.600" /></svg></PageLink>
              </Pager>
              <Post $tone="blue" $h={165}>
                <AnswerHead n={1} />
                <PostBody $tone="blue" $pad="13px 14px"><Rating /><AnswerText>Kérni kell a modiktól tegyék jobbá , vakít a fehér háttér bárhogy állítom , vil.szürke jobb lenne .</AnswerText></PostBody>
                <PostFooter date="máj. 13. 15:46" note="Szerinted a válasz hasznos." h={37} />
              </Post>
              <Post $tone="green" $h={124}>
                <PostHead $pad="0 5px 2px">2/13 A kérdező kommentje:</PostHead>
                <PostBody $tone="green" $pad="11px">Hol lehet egyáltalán állítani?</PostBody>
                <PostFooter date="máj. 13. 15:47" />
              </Post>
              <Post $tone="blue" $h={165}>
                <AnswerHead n={3} />
                <PostBody $tone="blue" />
              </Post>
            </main>
          </Columns>
        </Page>
        <Scrollbar><Triangle /><Thumb /><Triangle down /></Scrollbar>
        <StatusBubble>https://www.gyakorikerdesek.hu/figyelt-kerdeseid</StatusBubble>
      </Viewport>

      <Taskbar>
        <TaskSpacer><LeftPlate /></TaskSpacer>
        <TaskItem><TaskIcon><Bin /></TaskIcon></TaskItem>
        <TaskItem><TaskIcon><Play /></TaskIcon></TaskItem>
        {[Explorer, Paint, Gimp, ChromeLogo].map((Icon, i) => (
          <TaskItem key={i}><TaskFrame><Frame blue={i === 3} /></TaskFrame><TaskIcon><Icon /></TaskIcon></TaskItem>
        ))}
        <TaskRight>
          <RightPlate>
            <svg width="300" height="36" viewBox="0 0 300 36">
              <path d="M0 10h4l8 7-6 10h-6l4 9h296V0H22L6 4z" fill="#070707" />
              <path d="M22 1.500h278" stroke="#74747c" />
              <path d="M4 4h18l5 4h22M12 13h20l6 3h60M16 18h100M12 23h24l6-3h60M4 33h22l6-4h20M30 11h60M34 26h60" stroke="#34343a" fill="none" strokeWidth="1.200" />
              <path d="M0 35h40" stroke="#3b3b3d" />
            </svg>
          </RightPlate>
          <Lang>
            HU
            <svg width="16" height="14" viewBox="0 0 16 14"><path d="M4 4c1-3 4-1 6-2s2-1 3-2" stroke="#ccc" fill="none" /><rect y="5" width="16" height="9" rx="1" fill="#ddd" /><path d="M2 7.500h12M2 9.500h12M4 11.800h8" stroke="#555" strokeDasharray="1.500 .8" /></svg>
            <svg width="14" height="14" viewBox="0 0 14 14"><rect x=".5" y="1.500" width="13" height="12" rx="2" fill="#141414" stroke="#303030" /><path d="M3 9.500h8L7 5.500z" fill="#303030" /></svg>
          </Lang>
          <Tray>
            <svg width="16" height="14" viewBox="0 0 16 14" fill="#fff"><path d="M1 0h1.300v14H1zM3 1.500c3-1.500 4 .5 6 .5v1h5.500l-1.500 2 1.500 2H9C7 6.500 6 6 3 8z" /></svg>
            <svg width="16" height="14" viewBox="0 0 16 14" fill="none" stroke="#e8e8e8" strokeWidth="1.500"><path d="M7 3h8v7H5V8M8 13h6M11 10v3M3 7v6h2M1.500 0v3M4.500 0v3M1 3.500h4V6H1z" /></svg>
            <svg width="16" height="14" viewBox="0 0 16 14" fill="none" stroke="#e8e8e8" strokeWidth="1.300"><path d="M1 5h2l3-3.500v11L3 9H1z" fill="#fff" /><path d="M8.500 5c1 1 1 3 0 4M10.500 3.500c1.500 2 1.500 5 0 7M12.500 2c2.500 3 2.500 7 0 10" /></svg>
            <Clock>12:20</Clock>
          </Tray>
        </TaskRight>
      </Taskbar>
    </Screen>
  );
}
